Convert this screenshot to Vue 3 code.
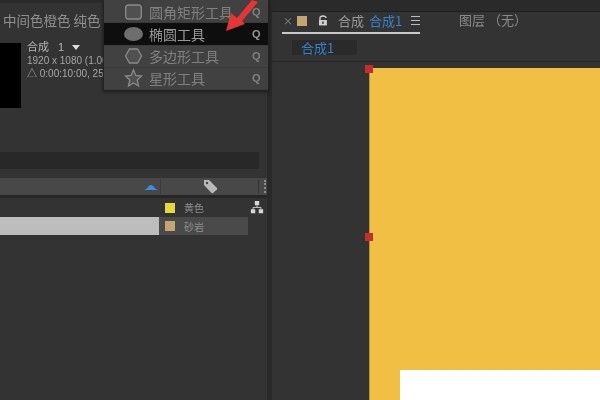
<template>
  <div class="screen">
    <div class="left">
      <div class="top-strip"></div>
      <div class="swatch-names">中间色橙色 纯色</div>
      <div class="project">
        <div class="thumb"></div>
        <div class="comp-info">
          <div class="comp-name">合成 1<span class="caret"></span></div>
          <div>1920 x 1080 (1.00)</div>
          <div>△ 0:00:10:00, 25.00 fps</div>
        </div>
      </div>
      <div class="search"></div>
      <div class="list-head">
        <svg class="sort" width="14" height="6" viewBox="0 0 14 6">
          <path d="M0 6Q3 5 5 2Q7 0 9 2Q11 5 14 6Z" fill="#3b8fe0" />
        </svg>
        <div class="tag-col">
          <svg width="15" height="15" viewBox="0 0 15 15">
            <path d="M1 3 L1 1 L6 1 L14 9 Q14.500 10 14 10.500 L10 14 Q9 14.500 8.500 14 L1 6 Z" fill="#b9b9b9" />
            <circle cx="4" cy="4" r="1.200" fill="#444" />
          </svg>
          <span class="dots"></span>
        </div>
      </div>
      <div class="rows">
        <div class="row">
          <div class="name"></div>
          <div class="label">
            <span class="chip yellow"></span>
            <span>黄色</span>
          </div>
          <svg class="flow" width="14" height="14" viewBox="0 0 16 16">
            <path d="M5.500 1H10.500V6H5.500ZM1 10.500H6V15H1ZM10 10.500H15V15H10Z" fill="#d6d6d6" />
            <path d="M8 6V8.500H3.500V11M8 8.500H12.500V11" stroke="#d6d6d6" fill="none" />
          </svg>
        </div>
        <div class="row selected">
          <div class="name"></div>
          <div class="label">
            <span class="chip sand"></span>
            <span>砂岩</span>
          </div>
        </div>
      </div>
    </div>

    <div class="gutter"></div>

    <div class="right">
      <div class="top-strip dark"></div>
      <div class="tabs">
        <div class="tab-active">
          <span class="close">×</span>
          <span class="chip sand"></span>
          <svg class="lock" width="10" height="11" viewBox="0 0 10 11">
            <path d="M2 5V3Q2 1 5 1Q8 1 8 3" stroke="#cfcfcf" stroke-width="1.400" fill="none" />
            <rect x="1" y="5" width="8" height="5.500" fill="#cfcfcf" />
            <rect x="4.300" y="6.500" width="1.400" height="2.500" fill="#333" />
          </svg>
          <span class="tab-word">合成</span>
          <span class="blue">合成1</span>
          <span class="burger"></span>
        </div>
        <div class="layer-tab">图层 （无）</div>
      </div>
      <div class="crumbs">
        <span class="crumb blue">合成1</span>
      </div>
      <div class="viewer">
        <div class="comp">
          <span class="handle corner"></span>
          <span class="handle mid"></span>
        </div>
      </div>
    </div>

    <div class="menu">
      <div v-for="item in tools" :key="item.name" class="menu-item" :class="{ on: item.on }">
        <svg class="tool-icon" width="22" height="20" viewBox="0 0 22 20" v-html="item.icon"></svg>
        <span class="tool-name">{{ item.name }}</span>
        <span class="q">Q</span>
      </div>
    </div>

    <svg class="arrow" width="40" height="34" viewBox="0 0 40 34">
      <path d="M4 31L9 13L15 18L30 0L36 2L20 21L23 24Z" fill="#e63535" />
    </svg>

    <div class="blank"></div>
  </div>
</template>

<script setup>
const tools = [
  { name: '圆角矩形工具', icon: '<rect x="3.700" y="3" width="15.600" height="14" rx="3" fill="#505050" stroke="#8a8a8a" stroke-width="1.300"/>' },
  { name: '椭圆工具', on: true, icon: '<ellipse cx="11.500" cy="10" rx="9.500" ry="7" fill="#6e6e6e"/>' },
  { name: '多边形工具', icon: '<path d="M7.500 3H15.500L19.500 10L15.500 17H7.500L3.500 10Z" fill="#505050" stroke="#8a8a8a" stroke-width="1.300"/>' },
  { name: '星形工具', icon: '<path d="M11.500 2L13.800 7.500L19.500 8L15.200 12L16.500 18L11.500 15L6.500 18L7.800 12L3.500 8L9.200 7.500Z" fill="#505050" stroke="#8a8a8a" stroke-width="1.300"/>' }
]
</script>

<style>
body {
  margin: 0;
  background: #333;
}
</style>

<style scoped>
.screen {
  position: relative;
  display: flex;
  width: 600px;
  height: 400px;
  overflow: hidden;
  background: #333;
  font-family: "Noto Sans CJK SC", "Liberation Sans", sans-serif;
  color: #a8a8a8;
}

.left {
  width: 267px;
  flex: none;
  display: flex;
  flex-direction: column;
  filter: blur(0.5px);
}

.gutter {
  width: 5px;
  flex: none;
  background: #292929;
}

.right {
  flex: 1;
  display: flex;
  flex-direction: column;
  filter: blur(0.5px);
}

.top-strip {
  height: 3px;
  flex: none;
  background: #2a2a2a;
}

.top-strip.dark {
  height: 11px;
  border-bottom: 1px solid #1f1f1f;
}

.swatch-names {
  height: 25px;
  padding: 9px 0 0 3px;
  box-sizing: border-box;
  font-size: 13.500px;
  line-height: 16px;
  color: #8f8f8f;
  white-space: nowrap;
}

.project {
  display: flex;
  margin-top: 15px;
  height: 65px;
  gap: 6px;
}

.thumb {
  width: 21px;
  height: 65px;
  background: #000;
}

.comp-info {
  margin-top: -3px;
  font-family: "Liberation Sans", "Noto Sans CJK SC", sans-serif;
  font-size: 10px;
  line-height: 13px;
  color: #a6a6a6;
  white-space: nowrap;
}

.comp-name {
  font-size: 11px;
  line-height: 14px;
  word-spacing: 6px;
  color: #b4b4b4;
}

.caret {
  display: inline-block;
  margin-left: 8px;
  border: 4px solid transparent;
  border-top: 5px solid #ddd;
  border-bottom: 0;
  vertical-align: 1px;
}

.search {
  height: 17px;
  width: 259px;
  margin-top: 44px;
  background: #282828;
}

.list-head {
  display: flex;
  align-items: center;
  justify-content: flex-end;
  height: 17px;
  margin-top: 9px;
  background: #484848;
  border-bottom: 3px solid #262626;
}

.sort {
  margin-right: 2px;
}

.tag-col {
  display: flex;
  align-items: center;
  justify-content: space-between;
  width: 107px;
  padding: 0 1px 0 42px;
  box-sizing: border-box;
  border-left: 1px solid #3a3a3a;
}

.dots {
  width: 8px;
  height: 13px;
  border-left: 1px solid #333;
  border-right: 2px dotted #8a8a8a;
  box-sizing: border-box;
}

.row {
  display: flex;
  align-items: center;
  height: 19px;
}

.row.selected {
  height: 18px;
}

.name {
  width: 159px;
  height: 100%;
  flex: none;
}

.row.selected .name {
  background: #bdbdbd;
}

.label {
  display: flex;
  align-items: center;
  gap: 9px;
  width: 89px;
  height: 100%;
  flex: none;
  padding-left: 6px;
  box-sizing: border-box;
  font-size: 10px;
  color: #8f8f8f;
}

.row.selected .label {
  background: #4a4a4a;
}

.chip {
  display: inline-block;
  width: 10px;
  height: 10px;
  flex: none;
}

.yellow {
  background: #e8d73a;
}

.sand {
  background: #c2a672;
}

.flow {
  margin-left: 2px;
  margin-top: -2px;
}

.tabs {
  display: flex;
  height: 23px;
  flex: none;
}

.tab-active {
  display: flex;
  align-items: center;
  width: 138px;
  height: 22px;
  margin-left: 10px;
  padding: 0 0 4px 1px;
  box-sizing: border-box;
  border-bottom: 2px solid #c9c9c9;
  font-size: 13px;
  white-space: nowrap;
}

.close {
  width: 6px;
  font-size: 10px;
  color: #8c8c8c;
}

.tab-active .chip {
  margin-left: 8px;
  margin-top: 2px;
}

.lock {
  margin-left: 11px;
}

.tab-word {
  margin-left: 10px;
  color: #999;
}

.blue {
  color: #3583c9;
}

.tab-active .blue {
  margin-left: 5px;
}

.burger {
  width: 9px;
  height: 7px;
  margin-left: 9px;
  border-top: 1px solid #bbb;
  border-bottom: 1px solid #bbb;
  background: linear-gradient(#bbb, #bbb) center / 100% 1px no-repeat;
}

.layer-tab {
  margin-left: 39px;
  height: 18px;
  font-size: 13px;
  line-height: 16px;
  color: #8a8a8a;
  white-space: nowrap;
}

.crumbs {
  height: 27px;
  flex: none;
  padding: 5px 0 0 20px;
  box-sizing: border-box;
  border-bottom: 1px solid #262626;
}

.crumb {
  display: block;
  width: 65px;
  height: 15px;
  padding-left: 9px;
  box-sizing: border-box;
  background: #2a2a2a;
  font-size: 13px;
  line-height: 15px;
}

.viewer {
  flex: 1;
  padding: 6px 0 0 97px;
}

.comp {
  position: relative;
  height: 100%;
  background: #f2bf45;
  border-left: 1px solid #b8923c;
}

.handle {
  position: absolute;
  left: -5px;
  width: 8px;
  height: 8px;
  background: #c42e2c;
}

.corner {
  top: -3px;
}

.mid {
  top: 165px;
}

.menu {
  position: absolute;
  left: 103px;
  top: 0;
  width: 166px;
  height: 91px;
  display: flex;
  flex-direction: column;
  padding-top: 1px;
  background: #414141;
  border: 1px solid #232323;
  border-top: 0;
  box-sizing: border-box;
  box-shadow: 0 1px 3px rgba(0, 0, 0, 0.5);
  filter: blur(0.5px);
}

.menu-item {
  display: flex;
  align-items: center;
  flex: 1;
  padding-left: 18px;
  font-size: 14px;
  color: #808080;
  border-bottom: 1px solid #3a3a3a;
}

.menu-item.on {
  background: #0e0e0e;
  color: #999;
}

.tool-icon {
  flex: none;
}

.tool-name {
  flex: 1;
  margin-left: 5px;
  white-space: nowrap;
}

.q {
  width: 16px;
  font-family: "Liberation Sans", sans-serif;
  font-size: 11px;
  font-weight: bold;
}

.arrow {
  position: absolute;
  left: 222px;
  top: 0;
  filter: blur(0.4px);
}

.blank {
  position: absolute;
  left: 400px;
  top: 370px;
  width: 200px;
  height: 30px;
  background: #fff;
}
</style>
